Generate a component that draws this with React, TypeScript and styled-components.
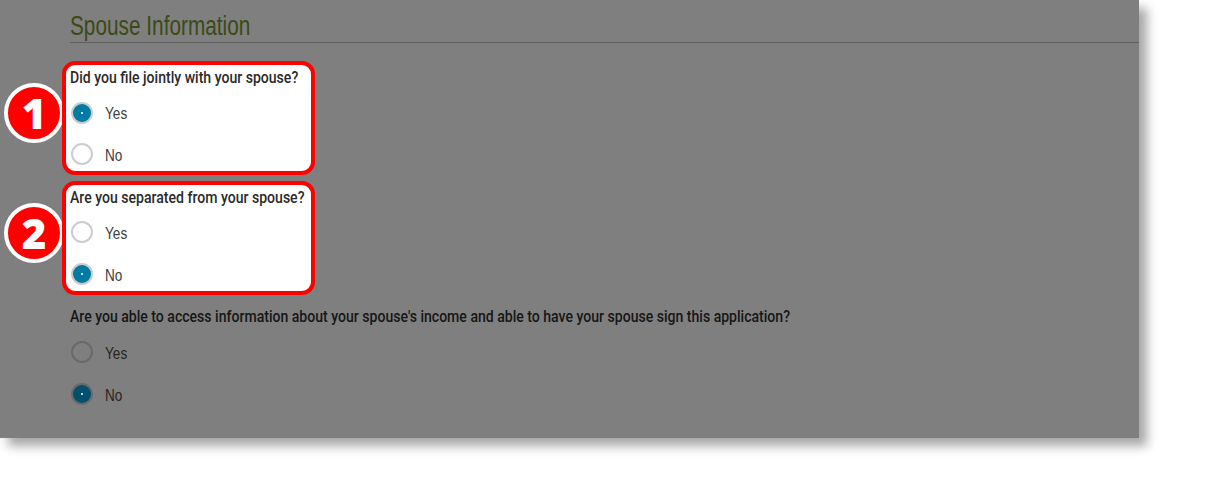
import styled, { createGlobalStyle } from 'styled-components';

const GlobalStyle = createGlobalStyle`
  html, body {
    margin: 0;
    padding: 0;
    background: #fff;
  }
  body {
    font-family: "Liberation Sans", Arial, sans-serif;
    overflow: hidden;
  }
`;

const Page = styled.div`
  width: 1207px;
  height: 500px;
  overflow: hidden;
`;

const Panel = styled.section`
  isolation: isolate;
  width: 1139px;
  height: 438px;
  box-sizing: border-box;
  padding: 0 0 0 70px;
  background: #7f7f7f;
  box-shadow: 8px 8px 10px rgba(0, 0, 0, 0.35);
`;

const Heading = styled.h2`
  height: 43px;
  margin: 0 0 18px;
  padding-top: 12px;
  box-sizing: border-box;
  border-bottom: 1px solid #5f5f5f;
  font-size: 27px;
  line-height: 29px;
  font-weight: 400;
  color: #3b4a16;
`;

// the original page uses a condensed web font, so squeeze the closest installed one
const Condensed = styled.span<{ $scale: number }>`
  display: inline-block;
  white-space: nowrap;
  transform: scaleX(${p => p.$scale});
  transform-origin: left center;
`;

const OptionLabel = styled(Condensed)`
  margin-top: 3px;
`;

const Highlight = styled.div`
  position: relative;
  width: 253px;
  height: 114px;
  box-sizing: border-box;
  margin: 0 0 6px -8px;
  padding: 0 0 0 4px;
  border: 4px solid #ff0000;
  border-radius: 13px;
  background: #fff;
`;

const Question = styled.div`
  height: 24px;
  margin-bottom: 2px;
  font-family: Roboto, "Liberation Sans", sans-serif;
  font-size: 17px;
  line-height: 24px;
  font-weight: 500;
  color: #2a2a2a;
  white-space: nowrap;
`;

const Option = styled.div<{ $height?: number }>`
  display: flex;
  align-items: center;
  gap: 12px;
  height: ${p => p.$height ?? 42}px;
  padding-left: 1px;
  font-size: 17px;
  color: #404040;
`;

const Plain = styled.div`
  margin-top: 9px;

  ${Question} {
    margin-bottom: 3px;
    color: #161616;
  }

  ${Option} {
    color: #2b2222;
  }
`;

const Radio = styled.span<{ $checked?: boolean; $dimmed?: boolean }>`
  position: relative;
  flex: none;
  width: 22px;
  height: 22px;
  box-sizing: border-box;
  border-radius: 50%;
  border: 2px solid ${p => (p.$dimmed ? '#6a6a6a' : '#cccccc')};
  background: ${p => {
    if (p.$checked) return p.$dimmed ? '#00506e' : '#007ba3';
    return p.$dimmed ? 'transparent' : '#fff';
  }};

  &::after {
    content: '';
    display: ${p => (p.$checked ? 'block' : 'none')};
    position: absolute;
    left: 8px;
    top: 8px;
    width: 2px;
    height: 2px;
    border-radius: 50%;
    background: #fff;
  }
`;

const Badge = styled.div`
  position: absolute;
  z-index: -1;
  left: -62px;
  top: 18px;
  width: 60px;
  height: 60px;
  box-sizing: border-box;
  display: flex;
  align-items: center;
  justify-content: center;
  border: 4px solid #fff;
  border-radius: 50%;
  background: #ff0000;
  color: #fff;
  font-family: "Open Sans", sans-serif;
  font-size: 42px;
  font-weight: 800;
  line-height: 1;
`;

const QUESTION_SCALE = 0.827;
const OPTION_SCALE = 0.8;

export default function App() {
  return (
    <Page>
      <GlobalStyle />
      <Panel>
        <Heading>
          <Condensed $scale={0.77}>Spouse Information</Condensed>
        </Heading>
        <Highlight>
          <Badge>1</Badge>
          <Question>
            <Condensed $scale={QUESTION_SCALE}>Did you file jointly with your spouse?</Condensed>
          </Question>
          <Option $height={43}>
            <Radio $checked />
            <OptionLabel $scale={OPTION_SCALE}>Yes</OptionLabel>
          </Option>
          <Option $height={40}>
            <Radio />
            <OptionLabel $scale={OPTION_SCALE}>No</OptionLabel>
          </Option>
        </Highlight>
        <Highlight>
          <Badge>2</Badge>
          <Question>
            <Condensed $scale={QUESTION_SCALE}>Are you separated from your spouse?</Condensed>
          </Question>
          <Option>
            <Radio />
            <OptionLabel $scale={OPTION_SCALE}>Yes</OptionLabel>
          </Option>
          <Option>
            <Radio $checked />
            <OptionLabel $scale={OPTION_SCALE}>No</OptionLabel>
          </Option>
        </Highlight>
        <Plain>
          <Question>
            <Condensed $scale={QUESTION_SCALE}>
              Are you able to access information about your spouse's income and able to have your spouse sign this application?
            </Condensed>
          </Question>
          <Option>
            <Radio $dimmed />
            <OptionLabel $scale={OPTION_SCALE}>Yes</OptionLabel>
          </Option>
          <Option>
            <Radio $checked $dimmed />
            <OptionLabel $scale={OPTION_SCALE}>No</OptionLabel>
          </Option>
        </Plain>
      </Panel>
    </Page>
  );
}
